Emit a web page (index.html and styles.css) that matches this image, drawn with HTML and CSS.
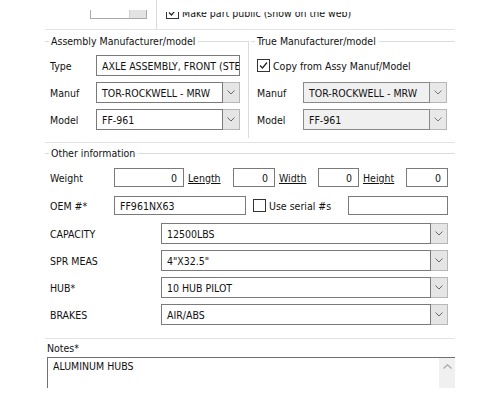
FILE: index.html
```html
<!DOCTYPE html>
<html lang="en">
<head>
<meta charset="utf-8">
<title>Part details</title>
<link rel="stylesheet" href="styles.css">
</head>
<body>
<div class="form">

  <div class="pub-row">
    <div class="pub-left">
      <div class="clip">
        <div class="spin"><span class="spin-btn"></span></div>
      </div>
    </div>
    <div class="pub-right">
      <div class="clip">
        <label class="check-line">
          <span class="cb"><svg viewBox="0 0 11 11" width="11" height="11"><polyline points="2,5.5 4.5,8 9,2.5" fill="none" stroke="#222" stroke-width="1.2"/></svg></span>
          Make part public (show on the web)
        </label>
      </div>
    </div>
  </div>

  <div class="groups">
    <section class="group group-left">
      <div class="legend"><span>Assembly Manufacturer/model</span></div>
      <div class="rows">
        <div class="row"><span class="lbl">Type</span><div class="field">AXLE ASSEMBLY, FRONT (STEER)</div></div>
        <div class="row"><span class="lbl">Manuf</span>
          <div class="select"><div class="val">TOR-ROCKWELL - MRW</div><div class="btn"><svg viewBox="0 0 8 5" width="8" height="5"><polyline points="0.5,0.5 4,4 7.5,0.5" fill="none" stroke="#666" stroke-width="1"/></svg></div></div>
        </div>
        <div class="row"><span class="lbl">Model</span>
          <div class="select"><div class="val">FF-961</div><div class="btn"><svg viewBox="0 0 8 5" width="8" height="5"><polyline points="0.5,0.5 4,4 7.5,0.5" fill="none" stroke="#666" stroke-width="1"/></svg></div></div>
        </div>
      </div>
    </section>

    <section class="group group-right">
      <div class="legend"><span>True Manufacturer/model</span></div>
      <div class="rows rows-right">
        <div class="row">
          <label class="check-line">
            <span class="cb"><svg viewBox="0 0 11 11" width="11" height="11"><polyline points="2,5.5 4.5,8 9,2.5" fill="none" stroke="#222" stroke-width="1.2"/></svg></span>
            Copy from Assy Manuf/Model
          </label>
        </div>
        <div class="row"><span class="lbl">Manuf</span>
          <div class="select disabled"><div class="val">TOR-ROCKWELL - MRW</div><div class="btn"><svg viewBox="0 0 8 5" width="8" height="5"><polyline points="0.5,0.5 4,4 7.5,0.5" fill="none" stroke="#777" stroke-width="1"/></svg></div></div>
        </div>
        <div class="row"><span class="lbl">Model</span>
          <div class="select disabled"><div class="val">FF-961</div><div class="btn"><svg viewBox="0 0 8 5" width="8" height="5"><polyline points="0.5,0.5 4,4 7.5,0.5" fill="none" stroke="#777" stroke-width="1"/></svg></div></div>
        </div>
      </div>
    </section>
  </div>

  <section class="other">
    <div class="legend"><span>Other information</span></div>

    <div class="fields-a">
      <div class="row">
        <span class="lbl lbl-wide">Weight</span>
        <div class="field num w-weight">0</div>
        <a class="dim dim-length">Length</a>
        <div class="field num w-length">0</div>
        <a class="dim dim-width">Width</a>
        <div class="field num w-width">0</div>
        <a class="dim dim-height">Height</a>
        <div class="field num w-height">0</div>
      </div>
      <div class="row">
        <span class="lbl lbl-wide">OEM #*</span>
        <div class="field w-oem">FF961NX63</div>
        <label class="check-line serial">
          <span class="cb"></span>
          Use serial #s
        </label>
        <div class="field w-serial"></div>
      </div>
    </div>

    <div class="fields-b">
      <div class="row"><span class="lbl lbl-attr">CAPACITY</span>
        <div class="select wide"><div class="val">12500LBS</div><div class="btn"><svg viewBox="0 0 8 5" width="8" height="5"><polyline points="0.5,0.5 4,4 7.5,0.5" fill="none" stroke="#666" stroke-width="1"/></svg></div></div>
      </div>
      <div class="row"><span class="lbl lbl-attr">SPR MEAS</span>
        <div class="select wide"><div class="val">4"X32.5"</div><div class="btn"><svg viewBox="0 0 8 5" width="8" height="5"><polyline points="0.5,0.5 4,4 7.5,0.5" fill="none" stroke="#666" stroke-width="1"/></svg></div></div>
      </div>
      <div class="row"><span class="lbl lbl-attr">HUB*</span>
        <div class="select wide"><div class="val">10 HUB PILOT</div><div class="btn"><svg viewBox="0 0 8 5" width="8" height="5"><polyline points="0.5,0.5 4,4 7.5,0.5" fill="none" stroke="#666" stroke-width="1"/></svg></div></div>
      </div>
      <div class="row"><span class="lbl lbl-attr">BRAKES</span>
        <div class="select wide"><div class="val">AIR/ABS</div><div class="btn"><svg viewBox="0 0 8 5" width="8" height="5"><polyline points="0.5,0.5 4,4 7.5,0.5" fill="none" stroke="#666" stroke-width="1"/></svg></div></div>
      </div>
    </div>
  </section>

  <section class="notes">
    <div class="notes-label">Notes*</div>
    <div class="memo">
      <div class="memo-text">ALUMINUM HUBS</div>
      <div class="scrollbar"><svg viewBox="0 0 9 5" width="9" height="5"><polyline points="0.5,4.5 4.5,0.8 8.5,4.5" fill="none" stroke="#a8a8a8" stroke-width="1.2"/></svg></div>
    </div>
  </section>

</div>
</body>
</html>
```

FILE: styles.css
```css
* {
  box-sizing: border-box;
}

html,
body {
  margin: 0;
  background: #fff;
}

body {
  font-family: "DejaVu Sans Condensed", "DejaVu Sans", "Liberation Sans", sans-serif;
  font-stretch: condensed;
  font-size: 10.5px;
  color: #111;
}

.form {
  width: 410px;
  margin-left: 45px;
}

/* publish strip, partly scrolled out of view */
.pub-row {
  display: flex;
  height: 30px;
  border-bottom: 1px solid #e3e3e3;
}

.pub-left {
  width: 112px;
  height: 29px;
  border-right: 1px solid #d9d9d9;
}

.pub-right {
  padding-left: 9px;
}

.clip {
  margin-top: 10px;
  height: 11px;
  overflow: hidden;
}

.pub-right .clip {
  margin-top: 12px;
  height: 9px;
}

.spin {
  display: flex;
  width: 57px;
  height: 21px;
  margin-top: -12px;
  margin-left: 45px;
  border: 1px solid #a9a9a9;
}

.spin-btn {
  margin-left: auto;
  width: 17px;
  background: #e3e3e3;
  border-left: 1px solid #cfcfcf;
}

.pub-right .check-line {
  margin-top: -6px;
}

/* checkboxes */
.check-line {
  display: flex;
  align-items: center;
  gap: 3px;
  height: 13px;
  white-space: nowrap;
}

.cb {
  display: flex;
  align-items: center;
  justify-content: center;
  width: 13px;
  height: 13px;
  border: 1px solid #333;
  background: #fff;
  flex: none;
}

/* manufacturer group boxes */
.groups {
  display: grid;
  grid-template-columns: 204px 206px;
  height: 113px;
  padding: 11px 0 4px;
  border-bottom: 1px solid #e3e3e3;
}

.group-left {
  border-right: 1px solid #dcdcdc;
}

.group-right {
  padding-left: 2px;
}

.legend {
  display: flex;
  align-items: center;
  height: 14px;
  line-height: 14px;
  white-space: nowrap;
}

.group .legend {
  margin-top: -7px;
}

.legend::before {
  content: "";
  width: 4px;
  height: 1px;
  background: #dcdcdc;
}

.legend span {
  padding: 0 3px 0 2px;
}

.legend::after {
  content: "";
  flex: 1;
  height: 1px;
  background: #dcdcdc;
}

.rows {
  display: flex;
  flex-direction: column;
  gap: 6px;
  margin-top: 7px;
  padding-left: 5px;
}

.rows-right {
  padding-left: 6px;
}

.row {
  display: flex;
  align-items: center;
  height: 21px;
}

.lbl {
  width: 46px;
  flex: none;
  white-space: nowrap;
}

.field {
  display: flex;
  align-items: center;
  width: 144px;
  height: 21px;
  padding: 0 5px;
  border: 1px solid #7a7a7a;
  background: #fff;
  white-space: nowrap;
  overflow: hidden;
  flex: none;
}

.select {
  display: flex;
  width: 144px;
  height: 21px;
  flex: none;
}

.select .val {
  flex: 1;
  display: flex;
  align-items: center;
  padding-left: 5px;
  border: 1px solid #7a7a7a;
  background: #fff;
  white-space: nowrap;
  overflow: hidden;
}

.select .btn {
  display: flex;
  align-items: center;
  justify-content: center;
  width: 17px;
  border: 1px solid #b7b7b7;
  border-left: 0;
  background: #e5e5e5;
}

.select.disabled .val {
  background: #f0f0f0;
  border-color: #8a8a8a;
}

.select.disabled .btn {
  background: #e8e8e8;
}

/* other information */
.other {
  padding: 3px 0 13px;
  border-bottom: 1px solid #e3e3e3;
}

.fields-a {
  display: flex;
  flex-direction: column;
  gap: 7px;
  margin-top: 7px;
  padding-left: 5px;
}

.fields-a .field {
  height: 19px;
}

.lbl-wide {
  width: 64px;
}

.num {
  justify-content: flex-end;
  padding-right: 6px;
}

.w-weight { width: 70px; }
.w-length { width: 42px; }
.w-width { width: 41px; }
.w-height { width: 42px; }
.w-oem { width: 132px; }
.w-serial { width: 100px; }

.dim {
  padding-left: 4px;
  text-decoration: underline;
  color: #111;
  flex: none;
}

.dim-length { width: 49px; }
.dim-width { width: 43px; }
.dim-height { width: 47px; }

.serial {
  width: 102px;
  padding-left: 7px;
}

.fields-b {
  display: flex;
  flex-direction: column;
  gap: 6px;
  margin-top: 7px;
  padding-left: 5px;
}

.lbl-attr {
  width: 111px;
}

.select.wide {
  width: 287px;
}

/* notes memo */
.notes-label {
  height: 13px;
  line-height: 13px;
  margin: 3px 0 0 2px;
}

.memo {
  display: flex;
  height: 31px;
  margin: 2px 0 0 2px;
  border-top: 1px solid #707070;
  border-left: 1px solid #707070;
}

.memo-text {
  flex: 1;
  padding: 2px 0 0 5px;
}

.scrollbar {
  display: flex;
  justify-content: center;
  width: 16px;
  padding-top: 6px;
  background: #f0f0f0;
}
```
